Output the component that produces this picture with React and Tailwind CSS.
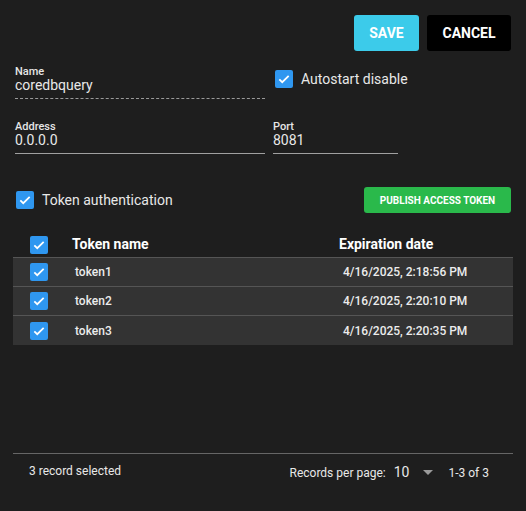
import React from 'react';

function Check({ className = '' }) {
    return (
        <span className={`flex items-center justify-center w-[18px] h-[18px] rounded-[2px] bg-[#2f97f0] shrink-0 ${className}`}>
            <svg viewBox="0 0 24 24" className="w-[14px] h-[14px]" fill="none" stroke="white" strokeWidth="3">
                <path d="M4 12.5l5 5L20 6.5" />
            </svg>
        </span>
    );
}

function Field({ label, value, dashed, className = '' }) {
    return (
        <div className={`flex flex-col ${className}`}>
            <span className="text-[11px] leading-[11px] text-[#e6e6e6] font-medium">{label}</span>
            <span className="text-[14px] leading-[16px] text-[#e8e8e8]">{value}</span>
            <div
                className={`mt-[5px] border-b ${dashed ? 'border-dashed border-[#9a9a9a]' : 'border-[#a0a0a0]'}`}
            />
        </div>
    );
}

const tokens = [
    { name: 'token1', date: '4/16/2025, 2:18:56 PM' },
    { name: 'token2', date: '4/16/2025, 2:20:10 PM' },
    { name: 'token3', date: '4/16/2025, 2:20:35 PM' },
];

export default function App() {
    return (
        <div
            className="w-[526px] h-[511px] bg-[#1e1e1e] text-white flex flex-col px-[13px]"
            style={{ fontFamily: 'Roboto, "Liberation Sans", sans-serif' }}
        >
            {/* Actions */}
            <div className="flex justify-end gap-[8px] pt-[15px] pr-[2px]">
                <button className="w-[65px] h-[36px] rounded-[3px] bg-[#3ccbea] text-[14px] font-bold text-white">
                    SAVE
                </button>
                <button className="w-[84px] h-[36px] rounded-[3px] bg-black text-[14px] font-bold text-white">
                    CANCEL
                </button>
            </div>

            {/* Name / autostart */}
            <div className="flex mt-[15px] pl-[2px]">
                <Field label="Name" value="coredbquery" dashed className="w-[250px]" />
                <label className="flex items-start gap-[8px] ml-[10px] mt-[4px]">
                    <Check />
                    <span className="text-[14px] leading-[18px] text-[#e8e8e8]">Autostart disable</span>
                </label>
            </div>

            {/* Address / port */}
            <div className="flex mt-[22px] pl-[2px]">
                <Field label="Address" value="0.0.0.0" className="w-[250px]" />
                <Field label="Port" value="8081" className="w-[125px] ml-[8px]" />
            </div>

            {/* Token auth */}
            <div className="flex items-center justify-between mt-[33px] pl-[3px] pr-[2px]">
                <label className="flex items-center gap-[8px]">
                    <Check />
                    <span className="text-[14px] text-[#e8e8e8]">Token authentication</span>
                </label>
                <button className="w-[147px] h-[26px] rounded-[3px] bg-[#2ab94b] text-[10px] font-bold text-white">
                    PUBLISH ACCESS TOKEN
                </button>
            </div>

            {/* Table */}
            <div className="mt-[20px]">
                <div className="flex items-center h-[24px] pb-[1px]">
                    <div className="w-[59px] pl-[17px]">
                        <Check />
                    </div>
                    <div className="w-[267px] text-[14px] font-bold">Token name</div>
                    <div className="text-[14px] font-bold">Expiration date</div>
                </div>
                <div className="border-t border-[#555]">
                    {tokens.map((t) => (
                        <div key={t.name} className="flex items-center h-[29px] bg-[#333333] border-b border-[#555] last:border-b-0">
                            <div className="w-[62px] pl-[17px]">
                                <Check />
                            </div>
                            <div className="w-[268px] text-[12px] font-medium text-[#ececec]">{t.name}</div>
                            <div className="text-[12px] font-medium text-[#ececec]">{t.date}</div>
                        </div>
                    ))}
                </div>
            </div>

            <div className="flex-1" />

            {/* Footer */}
            <div className="border-t border-[#666] h-[58px] flex items-start pt-[8px] text-[12px] text-[#e8e8e8]">
                <span className="ml-[16px]">3 record selected</span>
                <div className="ml-auto flex items-center mr-[24px]">
                    <span>Records per page:</span>
                    <span className="text-[14px] ml-[8px]">10</span>
                    <svg viewBox="0 0 10 5" className="w-[10px] h-[5px] ml-[14px]" fill="#9a9a9a">
                        <path d="M0 0h10L5 5z" />
                    </svg>
                    <span className="ml-[15px]">1-3 of 3</span>
                </div>
            </div>
        </div>
    );
}
